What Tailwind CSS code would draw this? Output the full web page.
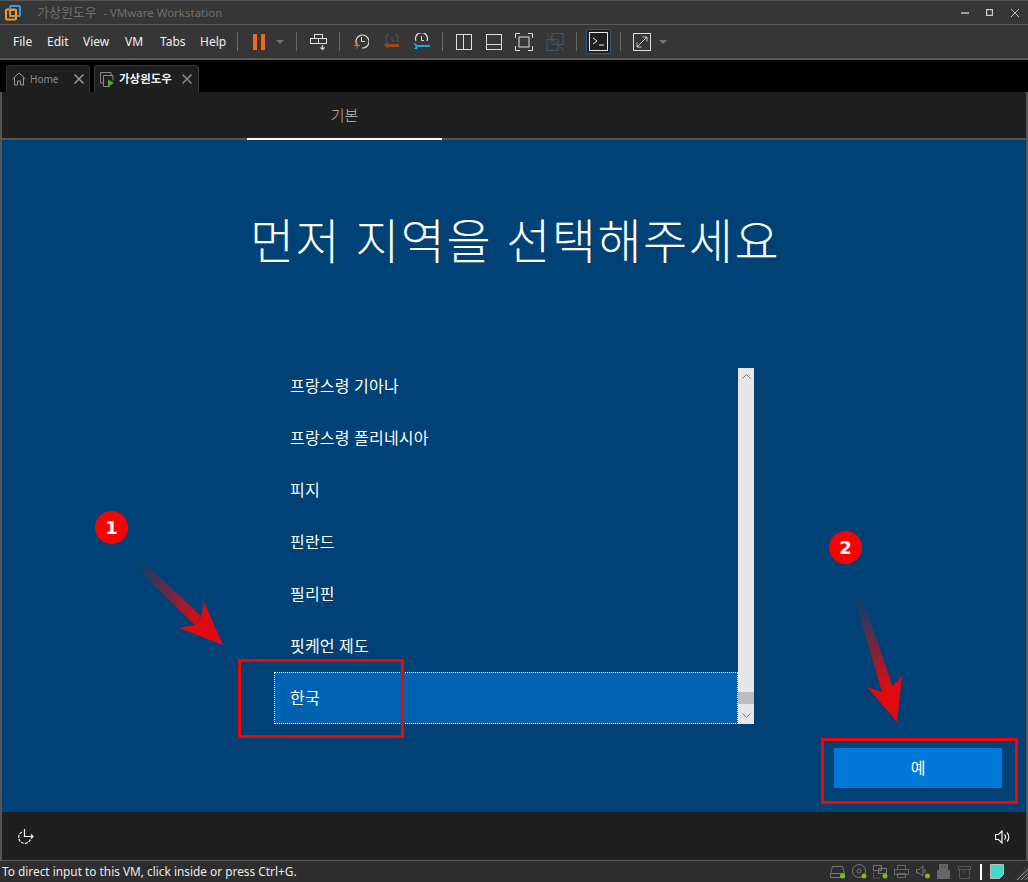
<!DOCTYPE html>
<html lang="ko">
<head>
<meta charset="UTF-8" />
<title>가상윈도우 - VMware Workstation</title>
<script src="https://cdn.jsdelivr.net/npm/@tailwindcss/browser@4"></script>
</head>
<body class="w-[1028px] h-[882px] overflow-hidden bg-[#333333] font-['Noto_Sans','Noto_Sans_CJK_KR',sans-serif]">
<div class="relative w-[1028px] h-[882px] flex flex-col">

  <!-- title bar -->
  <div class="h-[25px] flex items-center bg-[#363636] border-b border-[#5a5a5a] border-t border-t-[#555]">
    <svg class="ml-[5px] w-4 h-4" viewBox="0 0 16 16" fill="none"><rect x="1" y="4.5" width="10" height="10" rx="1" stroke="#f59a1b" stroke-width="2"/><rect x="5" y="1" width="10" height="10" rx="1" stroke="#2f9fe0" stroke-width="2"/><rect x="5" y="5" width="6" height="6" stroke="#f59a1b" stroke-width="1.5"/></svg>
    <span class="ml-[16px] text-[13px] text-[#6f6f6f]">가상윈도우 <span class="ml-[3px] text-[11.500px]">- VMware Workstation</span></span>
    <div class="ml-auto flex items-center gap-[17px] mr-[9px]">
      <svg class="w-[8px] h-[8px]" viewBox="0 0 8 8"><path d="M0 4h8" stroke="#ccc" stroke-width="1.4"/></svg>
      <svg class="w-[7px] h-[7px]" viewBox="0 0 7 7" fill="none"><rect x=".6" y=".6" width="5.8" height="5.8" stroke="#ccc" stroke-width="1.2"/></svg>
      <svg class="w-[8px] h-[8px] ml-[1px]" viewBox="0 0 8 8"><path d="M0 0l8 8M8 0l-8 8" stroke="#ccc" stroke-width=".9"/></svg>
    </div>
  </div>

  <!-- toolbar -->
  <div class="h-[35px] flex items-center bg-[#363636] border-b-2 border-[#5a5a5a] text-[12px] text-[#f0f0f0]">
    <span class="ml-[13px] w-[34px]">File</span>
    <span class="w-[36px]">Edit</span>
    <span class="w-[42px]">View</span>
    <span class="w-[35px]">VM</span>
    <span class="w-[40px]">Tabs</span>
    <span class="w-[37px]">Help</span>
    <div class="w-px h-[19px] bg-[#666]"></div>
    <div class="ml-[15px] w-[4px] h-[16px] bg-[#f26522]"></div>
    <div class="ml-[4px] w-[4px] h-[16px] bg-[#f26522]"></div>
    <svg class="ml-[11px] w-[8px] h-[4px]" viewBox="0 0 8 4"><path d="M0 0h8L4 4z" fill="#777"/></svg>
    <div class="ml-[12px] w-px h-[19px] bg-[#666]"></div>
    <svg class="ml-[13px] w-[17px] h-[18px]" viewBox="0 0 17 18" fill="none" stroke="#ddd"><rect x="4.5" y="1.5" width="8" height="4"/><rect x=".5" y="5.5" width="8" height="5"/><rect x="8.5" y="5.5" width="8" height="5"/><path d="M12.5 12v4M10.5 14.500l2 2 2-2" stroke-width="1.200"/></svg>
    <div class="ml-[12px] w-px h-[19px] bg-[#666]"></div>
    <svg class="ml-[13px] w-[16px] h-[17px]" viewBox="0 0 16 17" fill="none"><path d="M4 12a6.500 6.500 0 1 1 5 3" stroke="#ddd" stroke-width="1.200"/><path d="M8.500 4v4.500H12" stroke="#ddd"/><path d="M4 9.500v6M1 12.500h6" stroke="#f26522" stroke-width="1.200"/></svg>
    <svg class="ml-[15px] w-[16px] h-[16px]" viewBox="0 0 16 16" fill="none"><path d="M3 8a6 6 0 1 1 10 0" stroke="#555" stroke-width="1.200"/><path d="M8 3v4h2.500" stroke="#555"/><path d="M0 11l4-3v2h11v3H4v2z" fill="#9c4a22"/></svg>
    <svg class="ml-[13px] w-[17px] h-[17px]" viewBox="0 0 17 17" fill="none"><path d="M3 8a6 6 0 1 1 11 0" stroke="#ddd" stroke-width="1.200"/><path d="M8.500 3v4.500H11" stroke="#ddd"/><path d="M0 10.500h3l1 1.500h13v2H5l-1 2H1l2-2.500z" fill="#2aa0e8"/></svg>
    <div class="ml-[12px] w-px h-[19px] bg-[#666]"></div>
    <svg class="ml-[13px] w-[16px] h-[16px]" viewBox="0 0 16 16" fill="none" stroke="#ddd"><rect x=".5" y=".5" width="15" height="15"/><path d="M7.500 0v16"/></svg>
    <svg class="ml-[14px] w-[16px] h-[16px]" viewBox="0 0 16 16" fill="none" stroke="#ddd"><rect x=".5" y=".5" width="15" height="15"/><path d="M0 10.500h16"/></svg>
    <svg class="ml-[13px] w-[18px] h-[18px]" viewBox="0 0 18 18" fill="none" stroke="#ddd"><path d="M.5 5V.5H5M13 .5h4.500V5M17.500 13v4.500H13M5 17.500H.5V13"/><rect x="4" y="4" width="10" height="10"/></svg>
    <svg class="ml-[13px] w-[18px] h-[18px]" viewBox="0 0 18 18" fill="none" stroke="#41566a"><rect x="6" y=".5" width="11" height="11"/><rect x="1" y="6.500" width="11" height="11"/><path d="M0 0l18 18"/></svg>
    <div class="ml-[12px] w-px h-[19px] bg-[#666]"></div>
    <div class="ml-[9px] w-[25px] h-[25px] flex items-center justify-center rounded-[2px] border border-[#2a5c86] bg-[#1f1f1f]">
      <svg class="w-[19px] h-[19px]" viewBox="0 0 19 19" fill="none" stroke="#e8e8e8"><rect x=".5" y=".5" width="18" height="18"/><path d="M4 6l4 3-4 3M10 13h5"/></svg>
    </div>
    <div class="ml-[9px] w-px h-[19px] bg-[#666]"></div>
    <svg class="ml-[12px] w-[18px] h-[18px]" viewBox="0 0 18 18" fill="none" stroke="#ddd"><rect x=".5" y=".5" width="17" height="17"/><path d="M4 14L14 4M9.500 4H14v4.500M4 9.500V14h4.500" stroke-width=".9"/></svg>
    <svg class="ml-[8px] w-[8px] h-[4px]" viewBox="0 0 8 4"><path d="M0 0h8L4 4z" fill="#777"/></svg>
  </div>

  <!-- tabs -->
  <div class="h-[32px] flex items-end bg-black pl-[6px] gap-[4px]">
    <div class="w-[84px] h-[27px] flex items-center rounded-t-[4px] border border-b-0 border-[#333] bg-[#1f1f1f] pl-[5px] text-[10px] text-[#8a8a8a]">
      <svg class="w-[14px] h-[14px]" viewBox="0 0 14 14" fill="none" stroke="#999"><path d="M.5 7L7 1l6.500 6M2.500 5.500V13h3V9h3v4h3V5.500"/></svg>
      <span class="ml-[4px]">Home</span>
      <svg class="ml-auto mr-[5px] w-[10px] h-[10px]" viewBox="0 0 10 10"><path d="M.5.5l9 9M9.500.5l-9 9" stroke="#999" stroke-width="1.500"/></svg>
    </div>
    <div class="w-[105px] h-[27px] flex items-center rounded-t-[4px] border border-b-0 border-[#3a3a3a] bg-[#1f1f1f] pl-[5px] text-[11.500px] font-bold text-[#f0f0f0]">
      <svg class="w-[15px] h-[15px]" viewBox="0 0 15 15" fill="none"><path d="M3.500 11H.5V.5H11v2.500" stroke="#888"/><path d="M10 14.500H3.500V3.500H13v5" stroke="#888"/><path d="M8 7.500l6 3.500-6 3.500z" fill="#5da423"/></svg>
      <span class="ml-[4px]">가상윈도우</span>
      <svg class="ml-auto mr-[6px] w-[10px] h-[10px]" viewBox="0 0 10 10"><path d="M.5.5l9 9M9.500.5l-9 9" stroke="#888" stroke-width="1.500"/></svg>
    </div>
  </div>

  <!-- vm frame -->
  <div class="flex-1 flex flex-col border-x-2 border-[#555] bg-[#1f1f1f]">
    <div class="h-[48px] border-b-2 border-[#555] pl-[245px] flex">
      <div class="w-[195px] h-[48px] -mb-[2px] border-b-2 border-white flex items-center justify-center text-[15px] text-[#bdbdbd] font-light">기본</div>
    </div>

    <div class="h-[672px] bg-[#004275] flex flex-col text-white">
      <h1 class="mt-[66px] h-[70px] text-center text-[48px] leading-[70px] font-light tracking-[1.500px] pl-[2px]">먼저 지역을 선택해주세요</h1>
      <div class="mt-[84px] ml-[272px] w-[480px] h-[364px] flex">
        <ul class="w-[464px] text-[16px] leading-[24px] tracking-[0.200px]">
          <li class="h-[52px] pl-[16px] flex items-center">프랑스령 기아나</li>
          <li class="h-[52px] pl-[16px] flex items-center">프랑스령 폴리네시아</li>
          <li class="h-[52px] pl-[16px] flex items-center">피지</li>
          <li class="h-[52px] pl-[16px] flex items-center">핀란드</li>
          <li class="h-[52px] pl-[16px] flex items-center">필리핀</li>
          <li class="h-[52px] pl-[16px] flex items-center">핏케언 제도</li>
          <li class="h-[52px] pl-[15px] flex items-center bg-[#0063b1] border border-dotted border-white">한국</li>
        </ul>
        <div class="mt-[8px] w-[16px] h-[356px] bg-[#e6e6e6] flex flex-col items-center">
          <svg class="mt-[6px] w-[9px] h-[5px]" viewBox="0 0 9 5" fill="none"><path d="M.5 4.500l4-4 4 4" stroke="#777"/></svg>
          <div class="mt-[313px] w-[16px] h-[12px] bg-[#bdbdbd]"></div>
          <svg class="mt-[9px] w-[9px] h-[5px]" viewBox="0 0 9 5" fill="none"><path d="M.5.5l4 4 4-4" stroke="#777"/></svg>
        </div>
      </div>
      <div class="mt-[24px] ml-[832px] w-[168px] h-[40px] bg-[#0078d7] flex items-center justify-center text-[16px]">예</div>
    </div>

    <div class="flex-1 flex items-center justify-between pl-[15px] pr-[16px] pt-[2px]">
      <svg class="w-[17px] h-[16px]" viewBox="0 0 17 16" fill="none" stroke="#f2f2f2" stroke-width="1.200"><path d="M5 3a6 6 0 1 0 8.500 7" stroke-dasharray="3 1"/><path d="M7.500 0v7.500H16M14 5.500l2 2-2 2"/></svg>
      <svg class="w-[15px] h-[14px]" viewBox="0 0 15 14" fill="none" stroke="#f2f2f2" stroke-width="1.200"><path d="M.5 4.500h3L7 1v12L3.500 9.500h-3z"/><path d="M9.500 4.500a3.500 3.500 0 0 1 0 5M12 2.500a6.500 6.500 0 0 1 0 9"/></svg>
    </div>
  </div>

  <!-- status bar -->
  <div class="h-[22px] flex items-center bg-[#2e2e2e] border-t border-[#5a5a5a] text-[11.850px] text-[#eaeaea]">
    <span class="ml-[2px]">To direct input to this VM, click inside or press Ctrl+G.</span>
    <div class="ml-auto flex items-center">
      <svg class="w-[16px] h-[15px]" viewBox="0 0 16 15" fill="none"><path d="M.5 13.500v-4l2-7h10l2 7v4zM.5 9.500h14" stroke="#777"/><circle cx="12.500" cy="12" r="2.500" fill="#7fba1f"/></svg>
      <svg class="ml-[6px] w-[15px] h-[15px]" viewBox="0 0 15 15" fill="none"><circle cx="7" cy="7" r="6.500" stroke="#777"/><circle cx="7" cy="7" r="2" stroke="#777"/><circle cx="12" cy="12" r="2.500" fill="#7fba1f"/></svg>
      <svg class="ml-[6px] w-[15px] h-[15px]" viewBox="0 0 15 15" fill="none" stroke="#777"><rect x=".5" y="1.500" width="8" height="5"/><rect x="5.500" y="4.500" width="8" height="5"/><path d="M.5 9v5h7" stroke-dasharray="1 1"/><circle cx="12" cy="12" r="2.500" fill="#7fba1f" stroke="none"/></svg>
      <svg class="ml-[6px] w-[15px] h-[15px]" viewBox="0 0 15 15" fill="none" stroke="#666"><rect x="3.500" y="1.500" width="8" height="4"/><rect x=".5" y="5.500" width="14" height="5"/><rect x="3.500" y="9.500" width="8" height="4"/></svg>
      <svg class="ml-[7px] w-[15px] h-[15px]" viewBox="0 0 15 15" fill="none" stroke="#777"><path d="M.5 5.500h2.500L7 2v10L3 9H.5z"/><path d="M9 5v4"/><circle cx="11.500" cy="12" r="2.500" fill="#7fba1f" stroke="none"/></svg>
      <svg class="ml-[5px] w-[15px] h-[15px]" viewBox="0 0 15 15"><path d="M3 0h9v6h2v9H1V6h2z" fill="#666"/><path d="M5.500 2.500h1v1h-1zM8.500 2.500h1v1h-1z" fill="#222"/></svg>
      <svg class="ml-[7px] w-[13px] h-[14px]" viewBox="0 0 13 14" fill="none" stroke="#555"><rect x=".5" y="1.500" width="12" height="3"/><path d="M1.500 4.500v9h10v-9M5 7h3"/></svg>
      <div class="ml-[9px] w-[2px] h-[16px] bg-white"></div>
      <svg class="ml-[8px] w-[14px] h-[15px]" viewBox="0 0 14 15"><path d="M.5.500h13v10l-4 4h-9z" fill="#3fdcc8" stroke="#bbb"/></svg>
      <svg class="ml-[10px] w-[14px] h-[14px] self-end" viewBox="0 0 14 14"><path d="M14 0v14H0z" fill="#3a3a3a"/><path d="M14 3L3 14M14 7L7 14M14 11l-3 3" stroke="#8a8a8a"/></svg>
    </div>
  </div>

  <!-- red annotations drawn over the screenshot -->
  <svg class="absolute left-0 top-0 w-[1028px] h-[882px] pointer-events-none" viewBox="0 0 1028 882" fill="none">
    <defs>
      <linearGradient id="a1" gradientUnits="userSpaceOnUse" x1="138" y1="563" x2="200" y2="622"><stop offset="0" stop-color="#e00b10" stop-opacity="0"/><stop offset="1" stop-color="#e00b10"/></linearGradient>
      <linearGradient id="a2" gradientUnits="userSpaceOnUse" x1="858" y1="597" x2="888" y2="690"><stop offset="0" stop-color="#e00b10" stop-opacity="0"/><stop offset="1" stop-color="#e00b10"/></linearGradient>
    </defs>
    <path d="M142 560L201 616 195 625 135 567z" fill="url(#a1)"/>
    <path d="M223 645L179 628 195 625 201 617 204 602z" fill="#e00b10"/>
    <path d="M854 598L862 596 893 688 882 692z" fill="url(#a2)"/>
    <path d="M897 722L867 687 882 692 892 687 902 676z" fill="#e00b10"/>
    <rect x="239.500" y="660.500" width="163" height="76" stroke="#ff0000" stroke-width="3"/>
    <rect x="822.500" y="739.500" width="194" height="63" stroke="#ff0000" stroke-width="3"/>
  </svg>
  <div class="absolute left-[95px] top-[511px] w-[33px] h-[33px] rounded-full bg-[#ff0000] flex items-center justify-center text-white text-[18px] font-bold font-['DejaVu_Sans',sans-serif]">1</div>
  <div class="absolute left-[829px] top-[531px] w-[33px] h-[33px] rounded-full bg-[#ff0000] flex items-center justify-center text-white text-[18px] font-bold font-['DejaVu_Sans',sans-serif]">2</div>
</div>
</body>
</html>
